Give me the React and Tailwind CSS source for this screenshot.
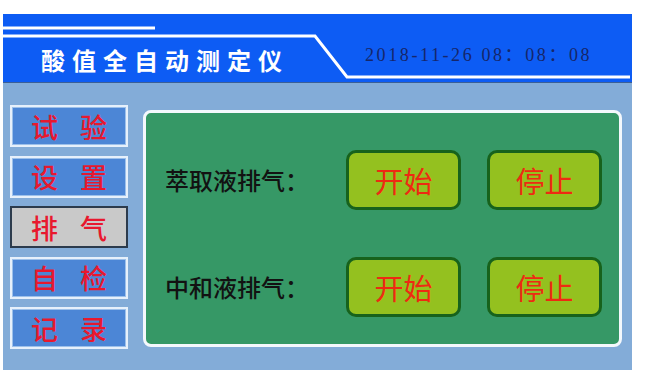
import React from "react";

const cjk = { fontFamily: '"Noto Sans CJK SC", "Noto Sans", sans-serif' };
const serif = { fontFamily: '"Liberation Serif", "Noto Sans CJK SC", serif' };

const menu = [
  ["试", "验"],
  ["设", "置"],
  ["排", "气"],
  ["自", "检"],
  ["记", "录"],
];

function MenuButton({ chars, active }) {
  return (
    <div
      className={
        "h-[42px] w-[118px] flex items-center justify-center gap-[22px] text-[27px] font-medium leading-none text-[#e8182e] " +
        (active
          ? "bg-[#c9c9c9] border-2 border-[#2c3b4c]"
          : "bg-[#4c86d6] border-2 border-[#e6f0fb] shadow-[inset_0_0_0_1px_#9cc0ea]")
      }
      style={cjk}
    >
      <span>{chars[0]}</span>
      <span>{chars[1]}</span>
    </div>
  );
}

function ActionButton({ label }) {
  return (
    <div
      className="h-[60px] w-[115px] flex items-center justify-center rounded-[10px] bg-[#94c11f] border-[3px] border-[#17621c] text-[29px] leading-none text-[#ee2a12]"
      style={cjk}
    >
      {label}
    </div>
  );
}

function Row({ label }) {
  return (
    <div className="flex items-center h-[60px]">
      <div className="flex-1 text-[24px] font-medium text-[#121212] leading-none" style={cjk}>
        {label}
      </div>
      <div className="flex gap-[26px]">
        <ActionButton label="开始" />
        <ActionButton label="停止" />
      </div>
    </div>
  );
}

export default function App() {
  return (
    <div className="w-[647px] h-[379px] bg-white pt-[14px] pl-[3px]">
      <div className="w-[629px] h-[356px] bg-[#83acd8] flex flex-col">
        <div className="relative h-[69px] bg-[#0d5cf4] border-b border-[#3b5f96] flex">
          <svg className="absolute inset-0" width="629" height="69">
            <line x1="0" y1="14" x2="152" y2="14" stroke="#ffffff" strokeWidth="3" />
            <polyline
              points="0,22 312,22 344,63 627,63"
              fill="none"
              stroke="#ffffff"
              strokeWidth="3"
            />
          </svg>
          <div
            className="relative ml-[38px] mt-[34px] text-[24px] font-semibold text-white tracking-[7px] leading-none"
            style={cjk}
          >
            酸值全自动测定仪
          </div>
          <div
            className="relative ml-[76px] mt-[32px] text-[18px] text-[#16266a] tracking-[2.6px] leading-none"
            style={serif}
          >
            2018-11-26 08：08：08
          </div>
        </div>
        <div className="flex flex-1 pl-[7px] pt-[22px] gap-[15px]">
          <div className="flex flex-col gap-[8.5px]">
            {menu.map((m, i) => (
              <MenuButton key={i} chars={m} active={i === 2} />
            ))}
          </div>
          <div className="mt-[5px] w-[479px] h-[237px] rounded-[8px] border-[3px] border-[#f4f8fc] bg-[#369866] pt-[37px] pl-[19px] pr-[17px] flex flex-col gap-[47px]">
            <Row label="萃取液排气：" />
            <Row label="中和液排气：" />
          </div>
        </div>
      </div>
    </div>
  );
}
